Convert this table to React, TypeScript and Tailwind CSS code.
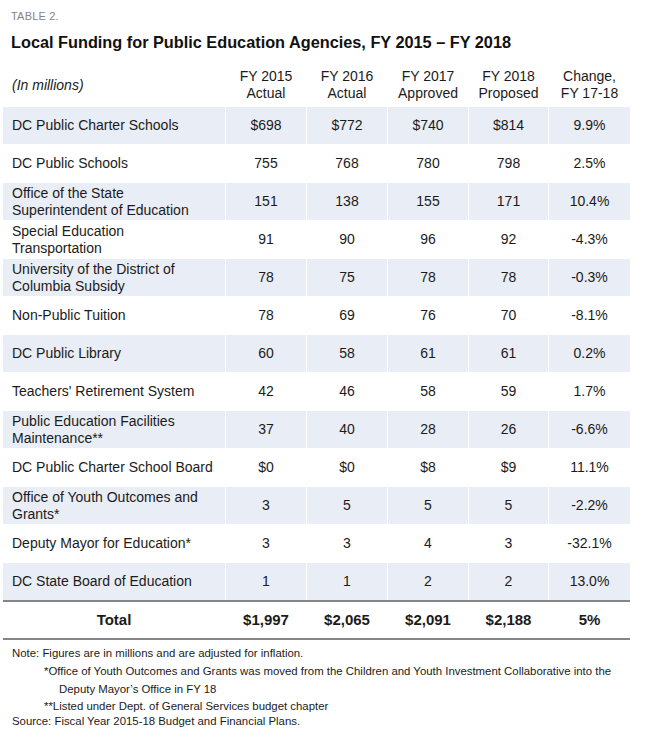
import React from "react";

type Row = { label: string[]; v: string[] };

const rows: Row[] = [
  { label: ["DC Public Charter Schools"], v: ["$698", "$772", "$740", "$814", "9.9%"] },
  { label: ["DC Public Schools"], v: ["755", "768", "780", "798", "2.5%"] },
  { label: ["Office of the State", "Superintendent of Education"], v: ["151", "138", "155", "171", "10.4%"] },
  { label: ["Special Education", "Transportation"], v: ["91", "90", "96", "92", "-4.3%"] },
  { label: ["University of the District of", "Columbia Subsidy"], v: ["78", "75", "78", "78", "-0.3%"] },
  { label: ["Non-Public Tuition"], v: ["78", "69", "76", "70", "-8.1%"] },
  { label: ["DC Public Library"], v: ["60", "58", "61", "61", "0.2%"] },
  { label: ["Teachers' Retirement System"], v: ["42", "46", "58", "59", "1.7%"] },
  { label: ["Public Education Facilities", "Maintenance**"], v: ["37", "40", "28", "26", "-6.6%"] },
  { label: ["DC Public Charter School Board"], v: ["$0", "$0", "$8", "$9", "11.1%"] },
  { label: ["Office of Youth Outcomes and", "Grants*"], v: ["3", "5", "5", "5", "-2.2%"] },
  { label: ["Deputy Mayor for Education*"], v: ["3", "3", "4", "3", "-32.1%"] },
  { label: ["DC State Board of Education"], v: ["1", "1", "2", "2", "13.0%"] },
];

const headers: string[][] = [
  ["FY 2015", "Actual"],
  ["FY 2016", "Actual"],
  ["FY 2017", "Approved"],
  ["FY 2018", "Proposed"],
  ["Change,", "FY 17-18"],
];

const cols = "grid grid-cols-[222px_80px_80px_80px_79px_81px] gap-x-[1px]";

export default function App() {
  return (
    <div className="w-[662px] h-[741px] bg-white text-[#1b1b1b] font-['Liberation_Sans',Arial,sans-serif]">
      <div className="pl-[11px] pt-[10px] text-[11px] leading-[13px] text-[#858585] tracking-[0.2px]">TABLE 2.</div>
      <div className="pl-[11px] pt-[9px] text-[16.3px] leading-[20px] font-bold text-[#111]">
        Local Funding for Public Education Agencies, FY 2015 – FY 2018
      </div>
      <div className="pl-[3px] pt-[15px]">
        <div className={`${cols} h-[36px] items-center text-[14px] leading-[17px]`}>
          <div className="pl-[9px] italic">(In millions)</div>
          {headers.map((h, i) => (
            <div key={i} className="text-center">
              <div>{h[0]}</div>
              <div>{h[1]}</div>
            </div>
          ))}
        </div>
        <div className="pt-[4px] flex flex-col gap-y-[1px] w-[627px]">
          {rows.map((r, i) => {
            const bg = i % 2 === 0 ? "bg-[#e9edf5]" : "bg-white";
            return (
              <div key={i} className={`${cols} h-[37px] text-[14px] leading-[17px]`}>
                <div className={`${bg} pl-[9px] flex flex-col justify-center`}>
                  {r.label.map((l, j) => (
                    <div key={j}>{l}</div>
                  ))}
                </div>
                {r.v.map((v, j) => (
                  <div key={j} className={`${bg} flex items-center justify-center`}>
                    {v}
                  </div>
                ))}
              </div>
            );
          })}
        </div>
        <div className="w-[627px] border-t-2 border-b-2 border-[#858585]">
          <div className={`${cols} h-[36px] items-center text-[15px] font-bold`}>
            <div className="text-center">Total</div>
            <div className="text-center">$1,997</div>
            <div className="text-center">$2,065</div>
            <div className="text-center">$2,091</div>
            <div className="text-center">$2,188</div>
            <div className="text-center">5%</div>
          </div>
        </div>
      </div>
      <div className="text-[11.4px] text-[#1b1b1b] pt-[4px]">
        <div className="pl-[12px] leading-[18px]">Note: Figures are in millions and are adjusted for inflation.</div>
        <div className="pl-[44px] leading-[18px]">
          *Office of Youth Outcomes and Grants was moved from the Children and Youth Investment Collaborative into the
        </div>
        <div className="pl-[59px] leading-[18px]">Deputy Mayor’s Office in FY 18</div>
        <div className="pl-[44px] leading-[17px]">**Listed under Dept. of General Services budget chapter</div>
        <div className="pl-[12px] leading-[13px]">Source: Fiscal Year 2015-18 Budget and Financial Plans.</div>
      </div>
    </div>
  );
}
